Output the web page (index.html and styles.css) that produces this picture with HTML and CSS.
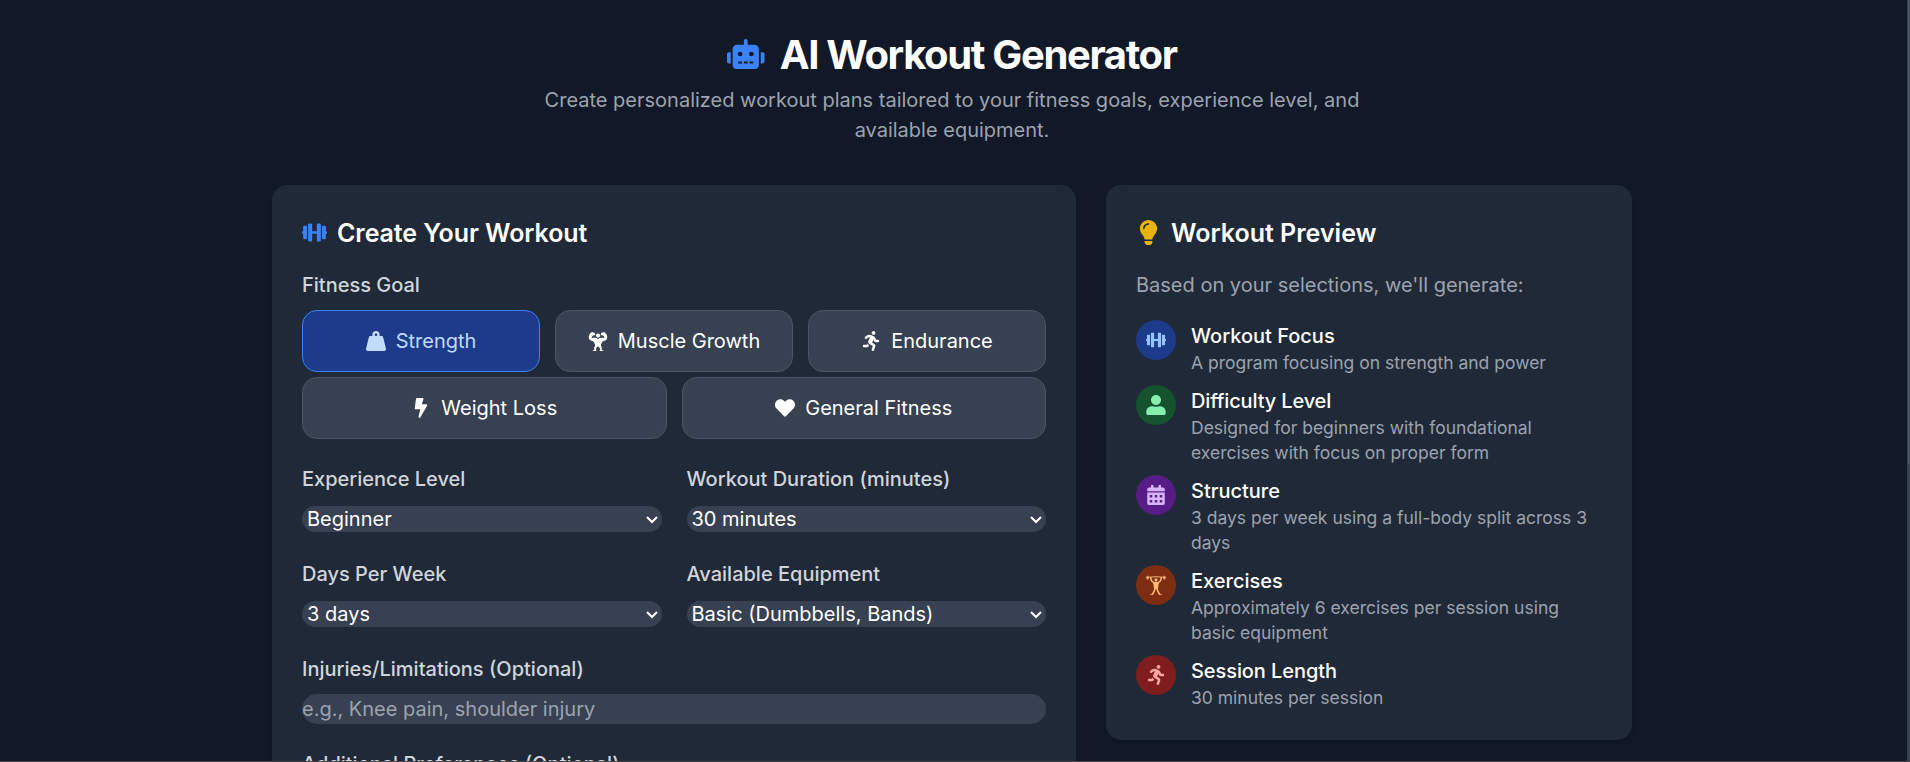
FILE: index.html
```html
<!DOCTYPE html>
<html lang="en">
<head>
<meta charset="utf-8">
<title>AI Workout Generator</title>
<link rel="stylesheet" href="styles.css">
</head>
<body>
<svg class="defs" aria-hidden="true">
  <symbol id="dumbbell" viewBox="0 0 512 512"><rect x="0" y="232" width="40" height="48" rx="8"/><rect x="472" y="232" width="40" height="48" rx="8"/><rect x="24" y="120" width="78" height="272" rx="18"/><rect x="410" y="120" width="78" height="272" rx="18"/><rect x="126" y="72" width="82" height="368" rx="20"/><rect x="304" y="72" width="82" height="368" rx="20"/><rect x="200" y="230" width="112" height="52"/></symbol>
  <symbol id="runner" viewBox="0 0 416 512"><path d="M272 96c26.500 0 48-21.500 48-48S298.500 0 272 0s-48 21.500-48 48 21.500 48 48 48zM113.700 317.500l-14.800 34.500H32c-17.700 0-32 14.300-32 32s14.300 32 32 32h77.500c19.200 0 36.600-11.400 44.100-29.100l8.800-20.500-10.700-6.300c-17.400-10.200-30.800-25.300-38-42.600zM384 224h-44l-26.100-53.300c-12.500-25.600-35.400-44.200-61.600-50.900l-71.100-21.100c-28.600-6.900-58.200-.4-81.200 17.200l-39.700 30.400c-14 10.700-16.700 30.800-5.900 44.900 10.700 14 30.800 16.700 44.900 5.900l39.700-30.400c7.700-5.900 17.500-8 25.300-6.100l14.700 4.400-37.500 87.400c-12.600 29.500-1.300 64 26.500 80.400l85 50.200-27.500 87.800c-5.300 16.900 4.100 34.900 21 40.200 3.200 1 6.400 1.500 9.600 1.500 13.600 0 26.200-8.700 30.500-22.400l31.600-101.100c5.800-20.100-2.400-42.100-20.200-53.800l-61.300-36.100 31.300-78.300 20.300 41.400c8 16.300 24.900 26.900 43.100 26.900H384c17.700 0 32-14.300 32-32s-14.300-32-32-32z"/></symbol>
</svg>
<main class="page">
  <header class="hero">
    <h1 class="hero-title">
      <svg class="robot" viewBox="0 0 640 512"><path fill-rule="evenodd" d="M32 224h32v192H32c-17.700 0-32-14.300-32-32V256c0-17.700 14.300-32 32-32zm512-48v272c0 35.300-28.700 64-64 64H160c-35.300 0-64-28.700-64-64V176c0-44.200 35.800-80 80-80h112V32c0-17.700 14.300-32 32-32s32 14.300 32 32v64h112c44.200 0 80 35.800 80 80zM264 256a40 40 0 1 0-80 0 40 40 0 1 0 80 0zm-8 128h-64v32h64v-32zm96 0h-64v32h64v-32zm104-128a40 40 0 1 0-80 0 40 40 0 1 0 80 0zm-8 128h-64v32h64v-32zM640 256v128c0 17.700-14.300 32-32 32h-32V224h32c17.700 0 32 14.300 32 32z"/></svg>
      <span>AI Workout Generator</span>
    </h1>
    <p class="hero-text">Create personalized workout plans tailored to your fitness goals, experience level, and available equipment.</p>
  </header>
  <div class="columns">
    <section class="card form-card">
      <h2 class="card-title"><svg class="title-icon blue"><use href="#dumbbell"/></svg><span class="form-heading">Create Your Workout</span></h2>
      <div class="label">Fitness Goal</div>
      <div class="goals">
        <button class="goal third active"><svg viewBox="0 0 512 512"><path d="M510.300 445.900L437.300 153.800C433.500 138.500 420.800 128 406.400 128H346.100c3.600-9.700 5.900-20.100 5.900-32 0-53-43-96-96-96s-96 43-96 96c0 11.900 2.300 22.300 5.900 32H105.600c-14.400 0-27.100 10.500-30.900 25.800L1.700 445.900C-6.600 479.200 16.400 512 48 512h416c31.600 0 54.600-32.800 46.300-66.100zM256 128c-17.600 0-32-14.400-32-32s14.400-32 32-32 32 14.400 32 32-14.400 32-32 32z"/></svg>Strength</button>
        <button class="goal third"><svg viewBox="0 0 20 20"><circle cx="10" cy="4.600" r="2.100"/><path d="M4.200 1.100l2.600.9.500 2-2.400.5-1.300 1.400.6 1.300C5.800 6.600 8 6.500 10 8c2-1.500 4.200-1.400 5.800-.8l.6-1.300-1.300-1.400-2.400-.5.500-2 2.600-.9c1.900.9 3.500 2.800 3.500 5.100 0 2-1.900 3.700-4.500 4.100l-1.600 2.600-.3 1.900 1.100 2.200-.3 1.900 1.700.5v.5h-3.700l.3-2.600L10 15.200l-2 2.100.3 2.600H4.600v-.5l1.700-.5-.3-1.900 1.100-2.200-.3-1.900-1.600-2.600C2.600 9.900.7 8.200.7 6.200c0-2.300 1.600-4.200 3.500-5.100z"/></svg>Muscle Growth</button>
        <button class="goal third"><svg><use href="#runner"/></svg>Endurance</button>
        <button class="goal half"><svg viewBox="0 0 320 512"><path d="M296 160H180.600l42.600-129.800C227.200 15 215.700 0 200 0H56C44 0 33.800 8.900 32.200 20.800l-32 240C-1.700 275.200 9.500 288 24 288h118.700L96.600 482.500c-3.600 15.200 8 29.500 23.300 29.500 8.400 0 16.400-4.400 20.800-12l176-304c9.300-15.900-2.200-36-20.700-36z"/></svg>Weight Loss</button>
        <button class="goal half"><svg viewBox="0 0 512 512"><path d="M462.300 62.600C407.500 15.900 326 24.300 275.700 76.200L256 96.500l-19.700-20.300C186.100 24.300 104.500 15.900 49.700 62.600c-62.800 53.600-66.100 149.800-9.900 207.900l193.500 199.800c12.500 12.900 32.800 12.900 45.300 0l193.500-199.800c56.300-58.100 53-154.300-9.800-207.900z"/></svg>General Fitness</button>
      </div>
      <div class="fields">
        <label class="field"><span class="label">Experience Level</span><span class="select">Beginner<svg class="chevron" viewBox="0 0 12 8"><path d="M1 1l5 5 5-5"/></svg></span></label>
        <label class="field"><span class="label">Workout Duration (minutes)</span><span class="select">30 minutes<svg class="chevron" viewBox="0 0 12 8"><path d="M1 1l5 5 5-5"/></svg></span></label>
        <label class="field"><span class="label">Days Per Week</span><span class="select">3 days<svg class="chevron" viewBox="0 0 12 8"><path d="M1 1l5 5 5-5"/></svg></span></label>
        <label class="field"><span class="label">Available Equipment</span><span class="select">Basic (Dumbbells, Bands)<svg class="chevron" viewBox="0 0 12 8"><path d="M1 1l5 5 5-5"/></svg></span></label>
      </div>
      <label class="field wide"><span class="label">Injuries/Limitations (Optional)</span><input class="input" placeholder="e.g., Knee pain, shoulder injury"></label>
      <label class="field wide"><span class="label">Additional Preferences (Optional)</span><input class="input"></label>
    </section>
    <section class="card">
      <h2 class="card-title"><svg class="title-icon amber" viewBox="0 0 512 512"><path fill-rule="evenodd" d="M176 430h160v18c0 12-3 22-10 31l-12 18c-6 9-16 15-27 15h-62c-11 0-21-6-27-15l-12-18c-7-9-10-19-10-31zM256 0c97 0 176 79 176 176 0 44-16 85-43 116-17 19-43 59-53 92v16H176v-16c-10-33-36-73-53-92-27-31-43-72-43-116C80 72 164 0 256 0zm0 96c9 0 16-7 16-16s-7-16-16-16c-62 0-112 50-112 112 0 9 7 16 16 16s16-7 16-16c0-44 36-80 80-80z"/></svg><span class="preview-heading">Workout Preview</span></h2>
      <p class="intro">Based on your selections, we'll generate:</p>
      <ul class="items">
        <li class="item"><span class="dot dot-blue"><svg><use href="#dumbbell"/></svg></span><div><h3>Workout Focus</h3><p>A program focusing on strength and power</p></div></li>
        <li class="item"><span class="dot dot-green"><svg viewBox="0 0 448 512"><path d="M224 256c70.700 0 128-57.300 128-128S294.700 0 224 0 96 57.300 96 128s57.300 128 128 128z"/><path d="M130 288h17c46 21 108 21 154 0h17c90 0 154 60 154 134v42c0 26.500-21.500 48-48 48H24c-26.500 0-48-21.500-48-48v-42c0-74 64-134 154-134z"/></svg></span><div><h3 class="h-level">Difficulty Level</h3><p>Designed for beginners with foundational exercises with focus on proper form</p></div></li>
        <li class="item"><span class="dot dot-purple"><svg viewBox="0 0 448 512"><path fill-rule="evenodd" d="M0 464c0 26.500 21.500 48 48 48h352c26.500 0 48-21.500 48-48V192H0v272zM64 256h64v64H64zm128 0h64v64h-64zm128 0h64v64h-64zM64 384h64v64H64zm128 0h64v64h-64zm128 0h64v64h-64zM400 64h-48V16c0-8.800-7.200-16-16-16h-32c-8.800 0-16 7.200-16 16v48H160V16c0-8.800-7.200-16-16-16h-32c-8.800 0-16 7.200-16 16v48H48C21.500 64 0 85.500 0 112v48h448v-48c0-26.500-21.500-48-48-48z"/></svg></span><div><h3>Structure</h3><p>3 days per week using a full-body split across 3 days</p></div></li>
        <li class="item"><span class="dot dot-orange"><svg viewBox="0 0 512 512"><g fill="none" stroke="currentColor"><path stroke-width="24" d="M20 62Q256 25 492 62"/><path stroke-width="34" d="M48 22v94M464 22v94"/><path stroke-width="20" d="M16 40v58M496 40v58"/><path stroke-width="38" d="M116 58l24 88 72 68M396 58l-24 88-72 68"/><path stroke-width="42" d="M240 320l-30 90-42 82M272 320l30 90 42 82"/><path stroke-width="24" d="M110 496h76M402 496h-76"/></g><circle cx="256" cy="125" r="40"/><path d="M180 180h152l-26 172H206z"/></svg></span><div><h3>Exercises</h3><p>Approximately 6 exercises per session using basic equipment</p></div></li>
        <li class="item"><span class="dot dot-red"><svg><use href="#runner"/></svg></span><div><h3 class="h-session">Session Length</h3><p>30 minutes per session</p></div></li>
      </ul>
    </section>
  </div>
</main>
<div class="scrollbar"><div class="thumb"></div></div>
<div class="edge"></div>
</body>
</html>
```

FILE: styles.css
```css
* { box-sizing: border-box; margin: 0; padding: 0; }
html { font-size: 20px; overflow: hidden; }
body {
  height: 762px;
  overflow: hidden;
  background: #111827;
  color: #fff;
  font-family: Inter, "Liberation Sans", sans-serif;
  font-size: 20px;
  line-height: 30px;
}
svg { fill: currentColor; flex: none; overflow: visible; }
.defs { position: absolute; width: 0; height: 0; }
.page { width: 1360px; margin-left: 272px; padding-top: 30px; }
.hero { text-align: center; height: 155px; }
.hero-title {
  display: flex; justify-content: center; align-items: center; gap: 15px;
  height: 50px; font-size: 40px; line-height: 50px; font-weight: 700; letter-spacing: -1.35px;
}
.robot { width: 37.5px; height: 30px; margin-bottom: 2px; color: #3b82f6; }
.hero-text { width: 840px; margin: 5px auto 0; color: #9ca3af; }
.columns { display: grid; grid-template-columns: 804px 526px; gap: 30px; align-items: start; }
.card {
  background: #1f2937; border-radius: 15px; padding: 30px;
  box-shadow: 0 4px 6px -1px rgba(0,0,0,.1), 0 2px 4px -2px rgba(0,0,0,.1);
}
.card-title { display: flex; align-items: center; gap: 10px; height: 35px; margin-bottom: 20px; font-size: 25px; line-height: 35px; font-weight: 600; }
.form-heading, .preview-heading { padding-top: 1px; }
.form-heading { letter-spacing: -.08px; }
.title-icon { width: 25px; height: 25px; }
.blue { color: #3b82f6; }
.amber { color: #eab308; }
.label { display: block; color: #d1d5db; font-weight: 500; height: 30px; }
.goals { display: flex; flex-wrap: wrap; gap: 5px 15px; margin-top: 10px; }
.goal {
  display: flex; align-items: center; justify-content: center; gap: 10px;
  height: 62px; border: 1px solid #4b5563; border-radius: 15px;
  background: #374151; color: #fff; font: 400 20px/30px Inter, "Liberation Sans", sans-serif;
}
.goal svg { width: 20px; height: 20px; }
.third { width: 238px; }
.half { width: 364.5px; }
.active { background: #1e3a8a; border-color: #3b82f6; color: #bfdbfe; }
.fields { display: grid; grid-template-columns: 1fr 1fr; gap: 27px 25px; margin-top: 25px; }
.field { display: block; }
.wide { margin-top: 25px; }
.fields + .wide { margin-top: 27px; }
.select {
  display: flex; align-items: center; justify-content: space-between;
  height: 26px; margin-top: 12px; padding: 0 4px 0 5px; border-radius: 15px; background: #374151;
}
.chevron { width: 12px; height: 8px; margin-top: 1px; fill: none; stroke: #fff; stroke-width: 2; }
.input {
  display: block; width: 100%; height: 30px; margin-top: 10px; border: 0; border-radius: 15px;
  background: #374151; color: #fff; font: 20px/30px Inter, "Liberation Sans", sans-serif;
}
.input::placeholder { color: #9ca3af; opacity: 1; }
.intro { color: #9ca3af; margin-bottom: 20px; }
.items { list-style: none; display: grid; gap: 10px; }
.item { display: flex; gap: 15px; }
.item h3 { height: 30px; padding-top: 1px; font-size: 20px; line-height: 30px; font-weight: 500; }
.item .h-level { letter-spacing: -.15px; }
.item .h-session { letter-spacing: -.08px; }
.item p { color: #9ca3af; font-size: 17.5px; line-height: 25px; }
.dot { display: flex; align-items: center; justify-content: center; flex: none; width: 40px; height: 40px; border-radius: 50%; }
.dot svg { width: 20px; height: 20px; }
.dot-blue { background: #1e3a8a; color: #93c5fd; }
.dot-green { background: #14532d; color: #86efac; }
.dot-purple { background: #581c87; color: #d8b4fe; }
.dot-orange { background: #7c2d12; color: #fdba74; }
.dot-red { background: #7f1d1d; color: #fca5a5; }
.scrollbar { position: absolute; top: 0; right: 0; width: 3px; height: 762px; background: #374151; }
.thumb { height: 464px; margin-left: 1px; background: #4b5563; }
.edge { position: absolute; left: 0; right: 0; top: 761px; height: 1px; background: #45474b; }
```
